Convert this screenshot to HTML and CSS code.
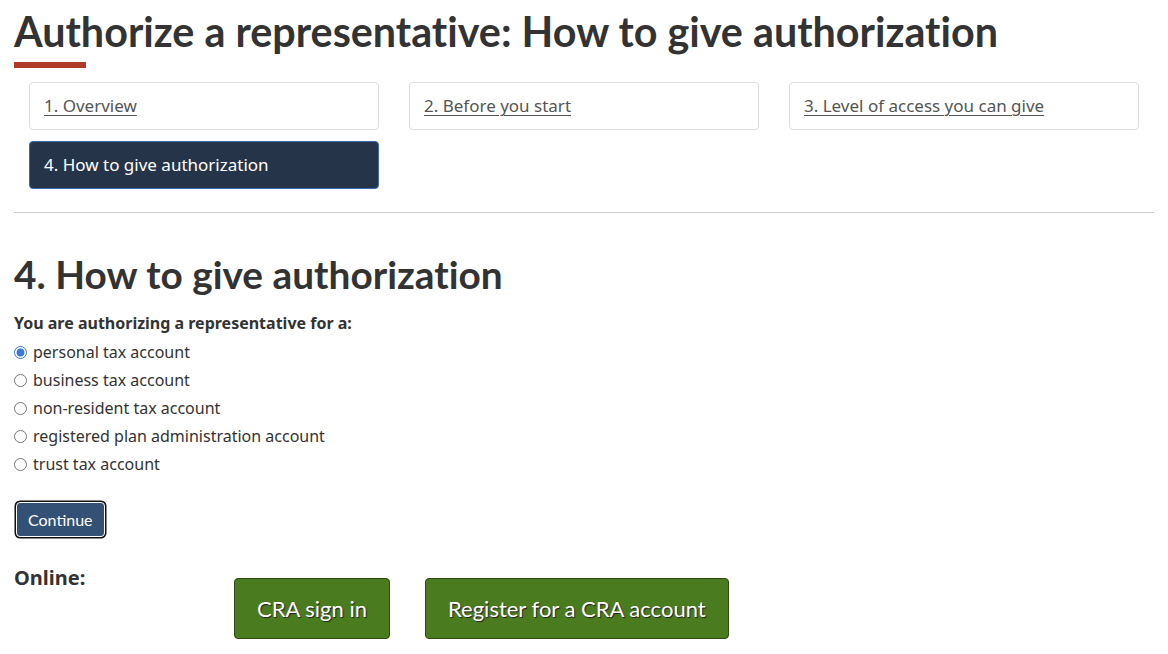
FILE: index.html
```html
<!DOCTYPE html>
<html lang="en">
<head>
<meta charset="utf-8">
<title>Authorize a representative: How to give authorization</title>
<link rel="stylesheet" href="styles.css">
</head>
<body>
<main class="page">
  <h1 class="page-title">Authorize a representative: How to give authorization</h1>
  <nav class="steps">
    <a class="step" href="#">1. Overview</a>
    <a class="step" href="#">2. Before you start</a>
    <a class="step" href="#">3. Level of access you can give</a>
    <span class="step step-active">4. How to give authorization</span>
  </nav>
  <hr class="divider">
  <h2 class="section-title">4. How to give authorization</h2>
  <form class="account-form">
    <p class="legend">You are authorizing a representative for a:</p>
    <ul class="radio-list">
      <li><label class="radio"><input type="radio" name="acct" checked> personal tax account</label></li>
      <li><label class="radio"><input type="radio" name="acct"> business tax account</label></li>
      <li><label class="radio"><input type="radio" name="acct"> non-resident tax account</label></li>
      <li><label class="radio"><input type="radio" name="acct"> registered plan administration account</label></li>
      <li><label class="radio"><input type="radio" name="acct"> trust tax account</label></li>
    </ul>
    <button type="button" class="btn-continue">Continue</button>
  </form>
  <div class="online">
    <p class="online-label">Online:</p>
    <div class="online-actions">
      <a class="btn-cta" href="#">CRA sign in</a>
      <a class="btn-cta" href="#">Register for a CRA account</a>
    </div>
  </div>
</main>
</body>
</html>
```
FILE: styles.css
```css
* { box-sizing: border-box; }
html, body { margin: 0; padding: 0; background: #fff; }
body {
  font-family: "Noto Sans", "Open Sans", sans-serif;
  color: #333;
  font-size: 16px;
  font-variant-ligatures: none;
}
.page {
  width: 1140px;
  margin-left: 14px;
  padding-top: 7px;
}
.page-title {
  font-family: Lato, sans-serif;
  font-weight: 700;
  font-size: 41.3px;
  line-height: 48px;
  margin: 0;
  color: #333;
}
.page-title::after {
  content: "";
  display: block;
  width: 72px;
  height: 6px;
  background: #af3c2b;
  margin-top: 7px;
}
.steps {
  display: grid;
  grid-template-columns: repeat(3, 350px);
  column-gap: 30px;
  row-gap: 11px;
  padding: 0 15px;
  margin-top: 14px;
}
.step {
  display: block;
  height: 48px;
  border: 1px solid #ddd;
  border-radius: 4px;
  padding: 11px 14px;
  line-height: 24px;
  font-size: 17px;
  color: #555;
  text-decoration: underline;
  text-underline-offset: 3px;
  text-decoration-thickness: 1px;
}
.step-active {
  background: #26344a;
  border-color: #3b6bb0;
  color: #fff;
  text-decoration: none;
}
.divider {
  border: 0;
  border-top: 1px solid #ccc;
  margin: 23px 0 0;
}
.section-title {
  font-family: Lato, sans-serif;
  font-weight: 700;
  font-size: 38.8px;
  line-height: 46px;
  margin: 38px 0 0;
  color: #333;
}
.account-form { margin-top: 14px; }
.legend {
  margin: 0;
  font-weight: 700;
  font-size: 16px;
  line-height: 24px;
}
.radio-list {
  list-style: none;
  margin: 3px 0 0;
  padding: 0;
}
.radio-list li { height: 28px; display: flex; align-items: center; }
.radio {
  display: flex;
  align-items: center;
  font-size: 16px;
  color: #333;
  gap: 6px;
}
.radio input {
  margin: 0;
  width: 13px;
  height: 13px;
  accent-color: #3b79d8;
}
.btn-continue {
  display: block;
  margin-top: 24px;
  margin-left: 2px;
  font-family: Lato, sans-serif;
  font-size: 16px;
  color: #fff;
  background: #335075;
  border: 1.5px solid #fff;
  border-radius: 4px;
  box-shadow: 0 0 0 1.5px #111;
  padding: 0 11px;
  height: 35px;
  line-height: 31px;
}
.online {
  display: flex;
  margin-top: 31px;
}
.online-label {
  width: 220px;
  margin: -2px 0 0;
  font-weight: 700;
  font-size: 20px;
  line-height: 24px;
  flex: none;
}
.online-actions {
  display: flex;
  gap: 35px;
  margin-top: 10px;
}
.btn-cta {
  display: block;
  background: #4a7c1f;
  border: 1px solid #2c4a12;
  border-radius: 4px;
  color: #fff;
  font-family: Lato, sans-serif;
  font-size: 22px;
  line-height: 59px;
  padding: 0 22px;
  text-decoration: none;
  text-shadow: 1px 1px 1px #222;
}
```
